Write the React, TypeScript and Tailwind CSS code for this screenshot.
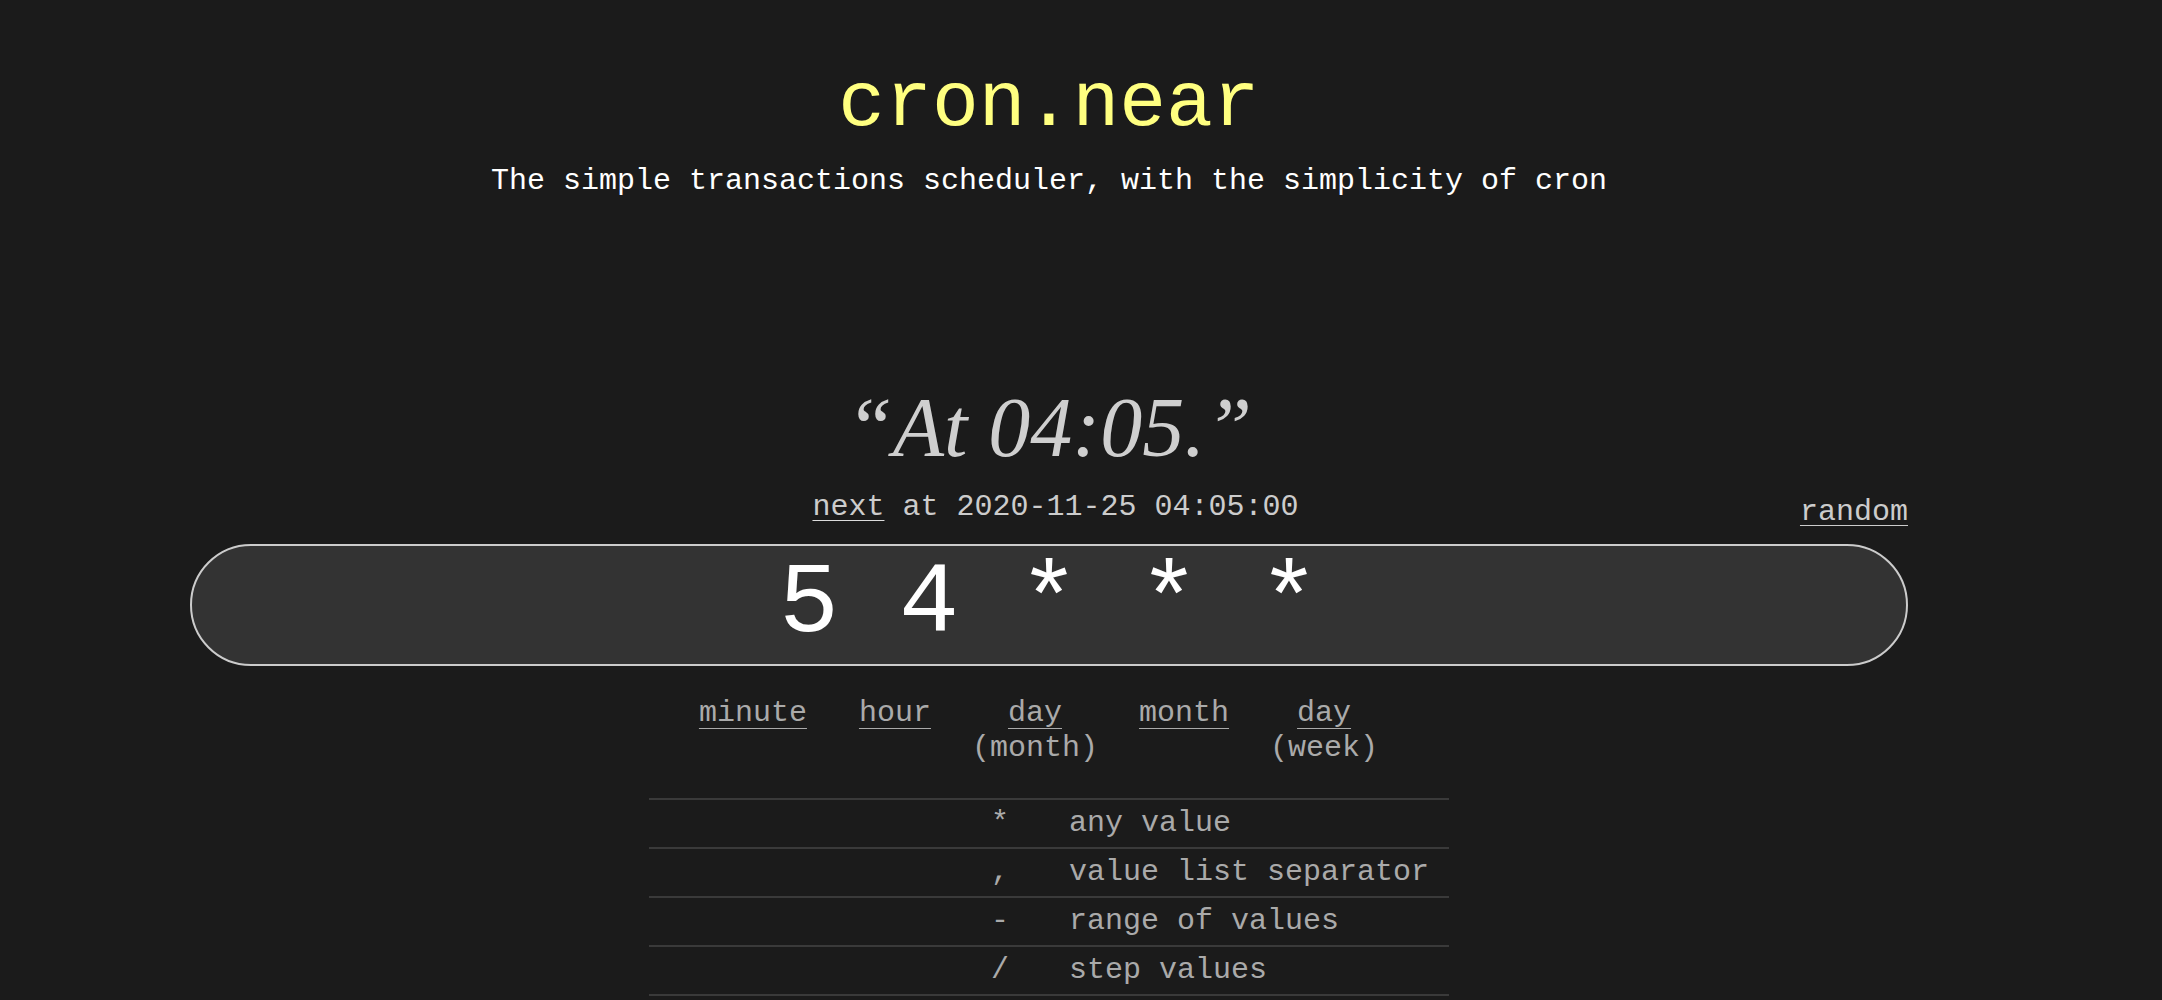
import React from "react";

// cron field legend shown under the expression box
const fields = [
  { name: "minute", sub: "" },
  { name: "hour", sub: "" },
  { name: "day", sub: "(month)" },
  { name: "month", sub: "" },
  { name: "day", sub: "(week)" },
];

const symbols = [
  { sym: "*", desc: "any value" },
  { sym: ",", desc: "value list separator" },
  { sym: "-", desc: "range of values" },
  { sym: "/", desc: "step values" },
];

const mono = { fontFamily: '"Liberation Mono", "Courier New", monospace' };
const serif = { fontFamily: '"Liberation Serif", "Times New Roman", serif' };

export default function App() {
  return (
    <div className="min-h-screen bg-[#1b1b1b]" style={mono}>
      <div className="w-[1718px] ml-[190px] flex flex-col items-center pb-10">
        {/* Header */}
        <h1 className="pt-[65px] text-[78px] leading-[78px] text-[#ffff80]">cron.near</h1>
        <p className="mt-[20px] text-[30px] leading-[36px] text-white">
          The simple transactions scheduler, with the simplicity of cron
        </p>

        {/* Human readable description */}
        <div className="mt-[184px] text-[84px] leading-[90px] italic text-[#cfcfcf]" style={serif}>
          “At 04:05.”
        </div>

        <div className="mt-[16px] w-full grid grid-cols-[1fr_auto_1fr] text-[30px] leading-[36px]">
          <div />
          <div className="pl-[13px] text-[#cccccc]">
            <span className="underline decoration-1 underline-offset-[5px] decoration-[#dddddd] cursor-pointer">next</span> at
            2020-11-25 04:05:00
          </div>
          <div className="flex justify-end pt-[5px]">
            <span className="text-[#cccccc] underline decoration-1 underline-offset-[5px] cursor-pointer">random</span>
          </div>
        </div>

        {/* Expression input */}
        <div className="mt-[14px] w-full h-[122px] rounded-full border-2 border-[#cccccc] bg-[#333333] flex items-center justify-center">
          <span className="text-[100px] leading-[118px] text-white whitespace-pre">5 4 * * *</span>
        </div>

        {/* Field labels */}
        <div className="mt-[30px] flex justify-center gap-[41px] pr-[21px] text-[30px] leading-[35px] text-[#aaaaaa]">
          {fields.map((f, i) => (
            <div key={i} className={`flex flex-col items-center ${i === 1 ? "ml-[11px]" : ""}`}>
              <span className="underline decoration-1 underline-offset-[7px] cursor-pointer">{f.name}</span>
              {f.sub && <span>{f.sub}</span>}
            </div>
          ))}
        </div>

        {/* Symbol reference */}
        <div className="mt-[32px] w-[800px] text-[30px] leading-[47px] text-[#aaaaaa] border-b-2 border-[#3a3a3a]">
          {symbols.map((s) => (
            <div key={s.sym} className="grid grid-cols-[360px_1fr] border-t-2 border-[#3a3a3a]">
              <span className="text-right">{s.sym}</span>
              <span className="pl-[60px]">{s.desc}</span>
            </div>
          ))}
        </div>
      </div>
    </div>
  );
}
